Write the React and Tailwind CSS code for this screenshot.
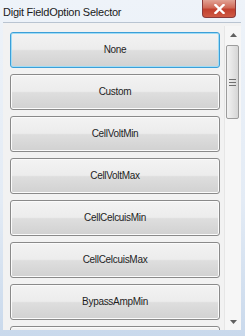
import React from "react";

const items = [
  "None",
  "Custom",
  "CellVoltMin",
  "CellVoltMax",
  "CellCelcuisMin",
  "CellCelcuisMax",
  "BypassAmpMin",
  "",
];

function Btn({ label, focused }) {
  return (
    <div
      className={
        "shrink-0 h-[36px] w-[210px] rounded-[3px] border flex items-center justify-center relative overflow-hidden " +
        (focused ? "border-[#3c9fd8]" : "border-[#8a8a8a]")
      }
      style={{
        background:
          "linear-gradient(to bottom, #f3f3f3 0%, #ececec 48%, #dedede 52%, #d1d1d1 100%)",
        boxShadow: focused ? "inset 0 0 0 1px #9fdcf5" : "inset 0 0 0 1px #fbfbfb",
      }}
    >
      <span
        className="text-[10px] text-[#1e1e1e] leading-none"
        style={{ fontFamily: '"Liberation Sans", Arial, sans-serif', letterSpacing: "-0.3px" }}
      >
        {label}
      </span>
    </div>
  );
}

export default function App() {
  return (
    <div
      className="w-[245px] h-[336px] flex flex-col overflow-hidden"
      style={{ background: "linear-gradient(to bottom, #eef3f9, #e3ebf5 60%, #c9d9ec)" }}
    >
      <div className="h-[22px] shrink-0 flex items-start">
        <span
          className="pl-[3px] pt-[6px] text-[11px] leading-[13px] text-[#1a1a1a]"
          style={{ fontFamily: '"Liberation Sans", Arial, sans-serif', letterSpacing: "-0.25px" }}
        >
          Digit FieldOption Selector
        </span>
        <div
          className="ml-auto mr-[9px] w-[34px] h-[18px] rounded-b-[4px] border border-t-0 border-[#8a3a3a] flex items-center justify-center"
          style={{ background: "linear-gradient(to bottom, #e2a294 0%, #d06a58 45%, #c2402e 55%, #cf5a44 100%)" }}
        >
          <svg width="11" height="10" viewBox="0 0 11 10">
            <path d="M1.5 1 L9.5 9 M9.5 1 L1.5 9" stroke="#fff" strokeWidth="2.4" strokeLinecap="square" />
          </svg>
        </div>
      </div>
      <div className="ml-[3px] mr-[4px] mb-[6px] flex-1 bg-[#f2f2f2] border-t border-[#b9c4d1] flex flex-col overflow-hidden">
        <div className="flex flex-1 mt-[3px] overflow-hidden">
          <div className="flex-1 flex flex-col gap-[6px] pl-[7px] pt-[6px] overflow-hidden">
            {items.map((it, i) => (
              <Btn key={i} label={it} focused={i === 0} />
            ))}
          </div>
          <div className="w-[17px] shrink-0 flex flex-col bg-[#f6f6f6] border-l border-[#e6e6e6]">
            <div className="h-[17px] shrink-0 flex items-center justify-center">
              <svg width="7" height="4" viewBox="0 0 7 4">
                <path d="M0 4 L3.5 0 L7 4 Z" fill="#606060" />
              </svg>
            </div>
            <div className="h-[2px]" />
            <div
              className="ml-[1px] mr-[2px] h-[74px] rounded-[2px] border border-[#9c9c9c] flex flex-col items-center justify-center gap-[2px]"
              style={{ background: "linear-gradient(to right, #f2f2f2, #e4e4e4 50%, #d6d6d6)" }}
            >
              <div className="w-[7px] h-[1px] bg-[#707070]" />
              <div className="w-[7px] h-[1px] bg-[#707070]" />
              <div className="w-[7px] h-[1px] bg-[#707070]" />
            </div>
            <div className="flex-1" />
            <div className="h-[17px] shrink-0 flex items-center justify-center">
              <svg width="7" height="4" viewBox="0 0 7 4">
                <path d="M0 0 L7 0 L3.5 4 Z" fill="#606060" />
              </svg>
            </div>
          </div>
        </div>
      </div>
    </div>
  );
}
